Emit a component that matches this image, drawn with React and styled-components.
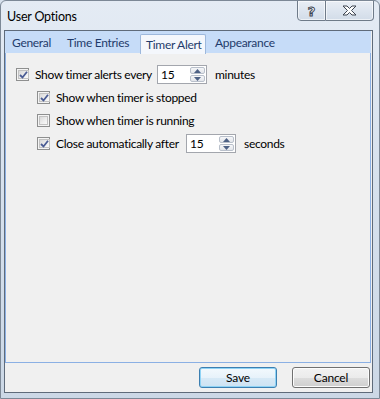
import React from 'react'
import styled, { createGlobalStyle } from 'styled-components'

const GlobalStyle = createGlobalStyle`
  html, body { margin: 0; padding: 0; background: #d6e0ec; }
  body {
    font-family: Lato, "Liberation Sans", sans-serif;
    font-size: 12px;
    letter-spacing: -0.3px;
    color: #000;
  }
  * { box-sizing: border-box; }
`

const Window = styled.div`
  width: 380px;
  height: 399px;
  display: flex;
  flex-direction: column;
  background: linear-gradient(to bottom, #e4ebf4 0%, #d7e1ed 45%, #ccd8e6 100%);
  border: 1px solid #7c8896;
  border-radius: 6px 6px 0 0;
  overflow: hidden;
`

const TitleBar = styled.div`
  height: 29px;
  display: flex;
  justify-content: space-between;
  align-items: flex-start;
`

const Title = styled.div`
  padding: 9px 0 0 6px;
  font-size: 12.5px;
  line-height: 14px;
  letter-spacing: -0.2px;
  color: #000;
`

const CaptionButtons = styled.div`
  display: flex;
  margin: -1px 5px 0 0;
`

const CaptionButton = styled.div`
  width: ${p => p.$w}px;
  height: 21px;
  display: flex;
  align-items: center;
  justify-content: center;
  border: 1px solid #6f7b89;
  border-left-width: ${p => (p.$first ? 1 : 0)}px;
  border-radius: ${p => (p.$first ? '0 0 0 4px' : '0 0 4px 0')};
  background: linear-gradient(to bottom, #e9eef5 0%, #dde5ef 50%, #d2dce8 100%);
  box-shadow: inset 0 0 0 1px rgba(255, 255, 255, 0.6);
`

const HelpGlyph = styled.span`
  font-family: "DejaVu Sans", sans-serif;
  font-weight: bold;
  font-size: 13px;
  line-height: 13px;
  letter-spacing: 0;
  color: #fff;
  -webkit-text-stroke: 1px #3d4450;
  margin-top: 1px;
`

const Client = styled.div`
  flex: 1;
  margin: 0 6px 5px 3px;
  border: 1px solid #5f6b7a;
  background: #f0f0f0;
  display: flex;
  flex-direction: column;
  padding-right: 1px;
`

const TabStrip = styled.div`
  height: 22px;
  background: #c6dcf8;
  display: flex;
  align-items: flex-end;
`

const Tab = styled.div`
  width: ${p => p.$w}px;
  height: ${p => (p.$active ? 20 : 22)}px;
  padding-left: ${p => p.$pad}px;
  display: flex;
  align-items: center;
  color: #1f3b6b;
  white-space: nowrap;
  margin-bottom: ${p => (p.$active ? -1 : 0)}px;
  background: ${p => (p.$active ? '#f4f7fc' : 'transparent')};
  border: ${p => (p.$active ? '1px solid #9db8dc' : 'none')};
  border-bottom: none;
  border-radius: 2px 2px 0 0;
  position: relative;
  z-index: ${p => (p.$active ? 1 : 0)};
`

const Panel = styled.div`
  flex: 1;
  border: 1px solid #8bb0e4;
  border-top: none;
  padding: 10px 0 0 10px;
  display: flex;
  flex-direction: column;
`

const Row = styled.div`
  height: 23px;
  display: flex;
  align-items: center;
  padding-left: ${p => p.$indent || 0}px;
`

const Box = styled.span`
  width: 13px;
  height: 13px;
  flex: none;
  border: 1px solid #8e8f8f;
  background: #f4f4f4;
  padding: 1px;
  margin-right: 6px;
  display: flex;
`

const BoxInner = styled.span`
  flex: 1;
  border: 1px solid #c2c2c2;
  background: linear-gradient(135deg, #d9d9d9 0%, #ededed 55%, #fafafa 100%);
  display: flex;
  align-items: center;
  justify-content: center;
`

const Label = styled.span`
  width: ${p => (p.$w ? `${p.$w}px` : 'auto')};
  flex: none;
  white-space: nowrap;
  line-height: 14px;
`

const Unit = styled.span`
  margin-left: 8px;
  white-space: nowrap;
`

const Spin = styled.div`
  width: 50px;
  height: 19px;
  border: 1px solid #a3a6ad;
  background: #fff;
  display: flex;
  align-items: stretch;
`

const SpinValue = styled.span`
  flex: 1;
  padding-left: 3px;
  display: flex;
  align-items: center;
  line-height: 14px;
`

const SpinButtons = styled.div`
  width: 16px;
  display: flex;
  flex-direction: column;
  gap: 1px;
  padding: 1px 1px 1px 0;
`

const SpinArrow = styled.div`
  flex: 1;
  border: 1px solid #b9c0cb;
  border-radius: 2px;
  background: linear-gradient(to bottom, #f6f7f9, #e2e5ea);
  display: flex;
  align-items: center;
  justify-content: center;
`

const ButtonRow = styled.div`
  height: 29px;
  display: flex;
  justify-content: flex-end;
  gap: 15px;
  padding: 4px 1px 0 0;
`

const Button = styled.button`
  width: 78px;
  height: 21px;
  font-family: inherit;
  font-size: 12px;
  letter-spacing: -0.2px;
  color: #000;
  padding: 0;
  border: 1px solid ${p => (p.$default ? '#3c7fb1' : '#707070')};
  border-radius: 3px;
  background: ${p =>
    p.$default
      ? 'linear-gradient(to bottom, #f3f9fd 0%, #e7f2fa 50%, #d7e9f6 50%, #cde3f3 100%)'
      : 'linear-gradient(to bottom, #f2f2f2 0%, #ebebeb 50%, #dddddd 50%, #cfcfcf 100%)'};
  box-shadow: ${p => (p.$default ? 'inset 0 0 0 1px #8fd3f5' : 'inset 0 0 0 1px #fcfcfc')};
`

function CheckBox({ checked }) {
  return (
    <Box>
      <BoxInner>
        {checked && (
          <svg width="9" height="8" viewBox="0 0 9 8">
            <path d="M1 4 L3.5 6.5 L8 0.8" fill="none" stroke="#4a5c94" strokeWidth="1.8" />
          </svg>
        )}
      </BoxInner>
    </Box>
  )
}

function SpinBox({ value }) {
  return (
    <Spin>
      <SpinValue>{value}</SpinValue>
      <SpinButtons>
        <SpinArrow>
          <svg width="7" height="4" viewBox="0 0 7 4"><path d="M0 4 L3.5 0 L7 4 Z" fill="#4d6185" /></svg>
        </SpinArrow>
        <SpinArrow>
          <svg width="7" height="4" viewBox="0 0 7 4"><path d="M0 0 L3.5 4 L7 0 Z" fill="#4d6185" /></svg>
        </SpinArrow>
      </SpinButtons>
    </Spin>
  )
}

const tabs = [
  { name: 'General', w: 56, pad: 7 },
  { name: 'Time Entries', w: 79, pad: 6 },
  { name: 'Timer Alert', w: 66, pad: 5, active: true },
  { name: 'Appearance', w: 75, pad: 9 },
]

export default function App() {
  return (
    <>
      <GlobalStyle />
      <Window>
        <TitleBar>
          <Title>User Options</Title>
          <CaptionButtons>
            <CaptionButton $w={29} $first>
              <HelpGlyph>?</HelpGlyph>
            </CaptionButton>
            <CaptionButton $w={48}>
              <svg width="15" height="11" viewBox="0 0 15 11">
                <path
                  d="M1 1 H5 L7.5 3.5 L10 1 H14 L9.5 5.5 L14 10 H10 L7.5 7.5 L5 10 H1 L5.5 5.5 Z"
                  fill="#fff"
                  stroke="#3d4450"
                  strokeWidth="1"
                  strokeLinejoin="round"
                />
              </svg>
            </CaptionButton>
          </CaptionButtons>
        </TitleBar>
        <Client>
          <TabStrip>
            {tabs.map(t => (
              <Tab key={t.name} $w={t.w} $pad={t.pad} $active={t.active}>
                {t.name}
              </Tab>
            ))}
          </TabStrip>
          <Panel>
            <Row>
              <CheckBox checked />
              <Label $w={122}>Show timer alerts every</Label>
              <SpinBox value="15" />
              <Unit>minutes</Unit>
            </Row>
            <Row $indent={21}>
              <CheckBox checked />
              <Label>Show when timer is stopped</Label>
            </Row>
            <Row $indent={21}>
              <CheckBox />
              <Label>Show when timer is running</Label>
            </Row>
            <Row $indent={21}>
              <CheckBox checked />
              <Label $w={130}>Close automatically after</Label>
              <SpinBox value="15" />
              <Unit>seconds</Unit>
            </Row>
          </Panel>
          <ButtonRow>
            <Button $default>Save</Button>
            <Button>Cancel</Button>
          </ButtonRow>
        </Client>
      </Window>
    </>
  )
}
